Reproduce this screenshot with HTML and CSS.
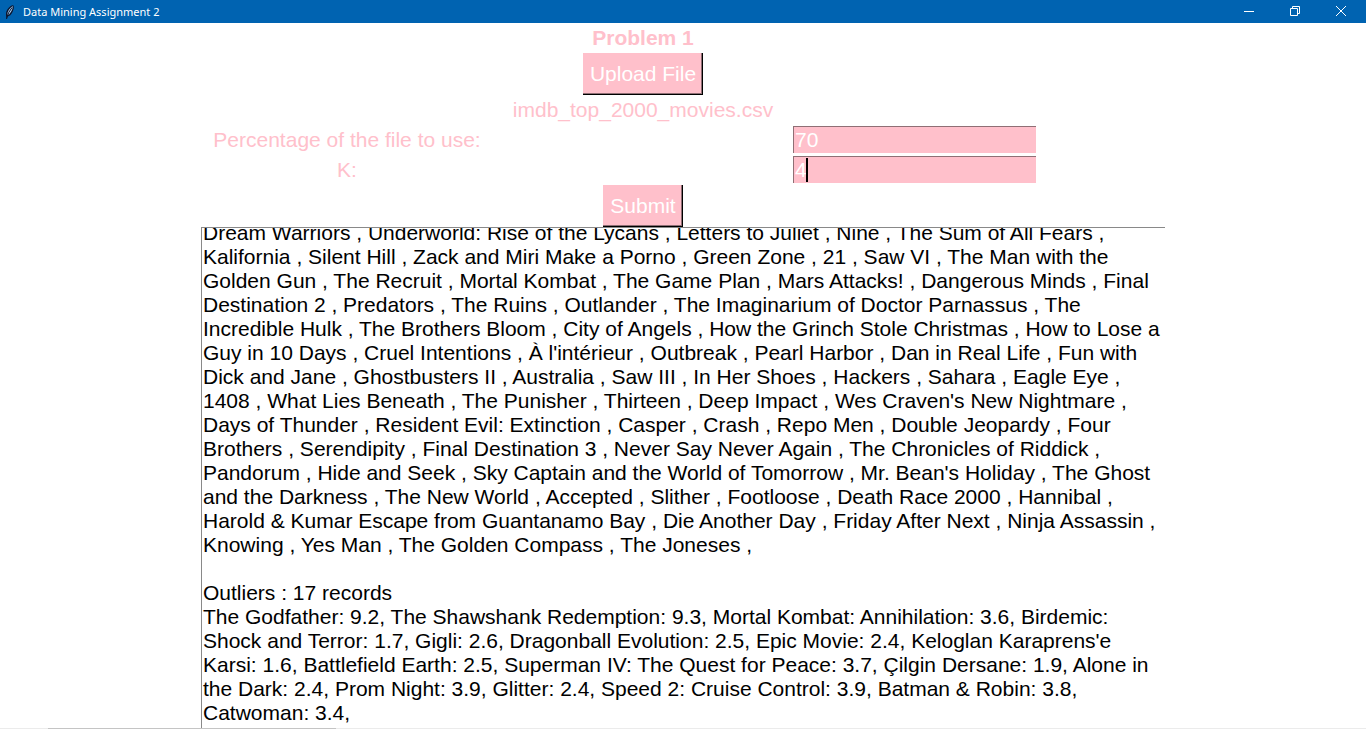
FILE: index.html
```
<!DOCTYPE html>
<html lang="en">
<head>
<meta charset="utf-8">
<title>Data Mining Assignment 2</title>
<link rel="stylesheet" href="styles.css">
</head>
<body>
<header class="titlebar">
  <svg class="feather" width="12" height="16" viewBox="0 0 12 16" aria-hidden="true">
    <path d="M2.500 15 2 11Q1.500 7 5 3.500Q8 .5 9.500 1.500Q10.500 4 8.500 8Q6.500 12 3.500 12.500Z" fill="#0b1630"/>
    <path d="M3.500 11Q3 6 8.800 2Q9 6 5 10.500Z" fill="#a9cdee"/>
    <path d="M2.500 15Q4 8 8 3.500" fill="none" stroke="#0b1630"/>
  </svg>
  <h1 class="caption">Data Mining Assignment 2</h1>
  <button class="winbtn" aria-label="Minimize"><svg width="10" height="10" viewBox="0 0 10 10"><path d="M0 5.500H10"/></svg></button>
  <button class="winbtn" aria-label="Restore"><svg width="10" height="10" viewBox="0 0 10 10"><path d="M.5 2.500H7.500V9.500H.5ZM2.500 2.500V.5H9.500V7.500H7.500"/></svg></button>
  <button class="winbtn" aria-label="Close"><svg width="10" height="10" viewBox="0 0 10 10"><path d="M0 0 10 10M10 0 0 10"/></svg></button>
</header>
<main class="window">
  <form class="form">
    <h2 class="heading middle">Problem 1</h2>
    <button class="button middle" type="button">Upload File</button>
    <p class="filename middle">imdb_top_2000_movies.csv</p>
    <label class="label" for="percent">Percentage of the file to use:</label>
    <input class="entry" id="percent" type="text" value="70">
    <label class="label" for="k">K:</label>
    <div class="field">
      <input class="entry" id="k" type="text" value="4">
      <span class="caret"></span>
    </div>
    <button class="button submit middle" type="button">Submit</button>
  </form>
  <textarea class="output" id="output" aria-label="Results" spellcheck="false" wrap="off">Dream Warriors , Underworld: Rise of the Lycans , Letters to Juliet , Nine , The Sum of All Fears ,
Kalifornia , Silent Hill , Zack and Miri Make a Porno , Green Zone , 21 , Saw VI , The Man with the
Golden Gun , The Recruit , Mortal Kombat , The Game Plan , Mars Attacks! , Dangerous Minds , Final
Destination 2 , Predators , The Ruins , Outlander , The Imaginarium of Doctor Parnassus , The
Incredible Hulk , The Brothers Bloom , City of Angels , How the Grinch Stole Christmas , How to Lose a
Guy in 10 Days , Cruel Intentions , À l'intérieur , Outbreak , Pearl Harbor , Dan in Real Life , Fun with
Dick and Jane , Ghostbusters II , Australia , Saw III , In Her Shoes , Hackers , Sahara , Eagle Eye ,
1408 , What Lies Beneath , The Punisher , Thirteen , Deep Impact , Wes Craven's New Nightmare ,
Days of Thunder , Resident Evil: Extinction , Casper , Crash , Repo Men , Double Jeopardy , Four
Brothers , Serendipity , Final Destination 3 , Never Say Never Again , The Chronicles of Riddick ,
Pandorum , Hide and Seek , Sky Captain and the World of Tomorrow , Mr. Bean's Holiday , The Ghost
and the Darkness , The New World , Accepted , Slither , Footloose , Death Race 2000 , Hannibal ,
Harold &amp; Kumar Escape from Guantanamo Bay , Die Another Day , Friday After Next , Ninja Assassin ,
Knowing , Yes Man , The Golden Compass , The Joneses ,

Outliers : 17 records
The Godfather: 9.2, The Shawshank Redemption: 9.3, Mortal Kombat: Annihilation: 3.6, Birdemic:
Shock and Terror: 1.7, Gigli: 2.6, Dragonball Evolution: 2.5, Epic Movie: 2.4, Keloglan Karaprens'e
Karsi: 1.6, Battlefield Earth: 2.5, Superman IV: The Quest for Peace: 3.7, Çilgin Dersane: 1.9, Alone in
the Dark: 2.4, Prom Night: 3.9, Glitter: 2.4, Speed 2: Cruise Control: 3.9, Batman &amp; Robin: 3.8,
Catwoman: 3.4,</textarea>
</main>
<footer class="edge"><div class="edge-bar"></div></footer>
<script src="script.js"></script>
</body>
</html>
```
FILE: styles.css
```
* {
  box-sizing: border-box;
}

body {
  margin: 0;
  height: 100vh;
  display: flex;
  flex-direction: column;
  overflow: hidden;
  background: #fff;
  font: 21px/24px "Liberation Sans", Arial, sans-serif;
}

.titlebar {
  display: flex;
  align-items: center;
  flex: none;
  height: 23px;
  padding-left: 4px;
  background: #0063b1;
  color: #fff;
}

.caption {
  flex: 1;
  margin: 0 0 0 7px;
  font: 11px/16px "Noto Sans", sans-serif;
}

.winbtn {
  display: flex;
  align-items: center;
  justify-content: center;
  width: 46px;
  height: 22px;
  padding: 0 4px 2px 0;
  border: 0;
  background: none;
}

.winbtn svg {
  fill: none;
  stroke: #fff;
}

.window {
  display: flex;
  flex-direction: column;
  flex: 1;
  min-height: 0;
  width: 100%;
  max-width: 964px;
  margin: 0 auto;
}

.form {
  display: grid;
  grid-template-columns: 292px 300px 243px;
  align-items: center;
  justify-items: center;
  color: #ffc0cb;
}

.middle {
  grid-column: 2;
}

.heading {
  margin: 3px 0;
  font: bold 21px/24px "Liberation Sans", Arial, sans-serif;
}

.filename {
  margin: 3px 0;
}

.button {
  height: 42px;
  padding: 1px 6px 0 7px;
  border: solid #000;
  border-width: 0 1px 1px 0;
  background: #ffc0cb;
  box-shadow: inset -1px -1px #8f6f75;
  color: #fff;
  font: inherit;
}

.label {
  grid-column: 1;
}

.entry {
  grid-column: 3;
  width: 100%;
  height: 27px;
  margin: 1px 0 2px;
  padding: 0 0 0 1px;
  border: solid #8f6f75;
  border-width: 1px 0 0 1px;
  border-radius: 0;
  background: #ffc0cb;
  color: #fff;
  font: inherit;
  outline: 0;
}

.field {
  grid-column: 3;
  display: flex;
  position: relative;
  width: 100%;
}

.caret {
  position: absolute;
  left: 13px;
  top: 3px;
  width: 2px;
  height: 24px;
  background: #000;
}

.output {
  flex: 1;
  min-height: 0;
  width: 100%;
  padding: 1px 0 3px 1px;
  border: solid #898989;
  border-width: 1px 0 0 1px;
  border-radius: 0;
  outline: 0;
  resize: none;
  overflow: hidden;
  background: #fff;
  color: #000;
  font: inherit;
  white-space: pre;
}

.edge {
  flex: none;
  height: 1px;
  padding-left: 48px;
  background: #ebebeb;
}

.edge-bar {
  width: 288px;
  height: 1px;
  background: #c4c4c4;
}
```
FILE: script.js
```
const output = document.getElementById("output");
output.scrollTop = output.scrollHeight;
```
